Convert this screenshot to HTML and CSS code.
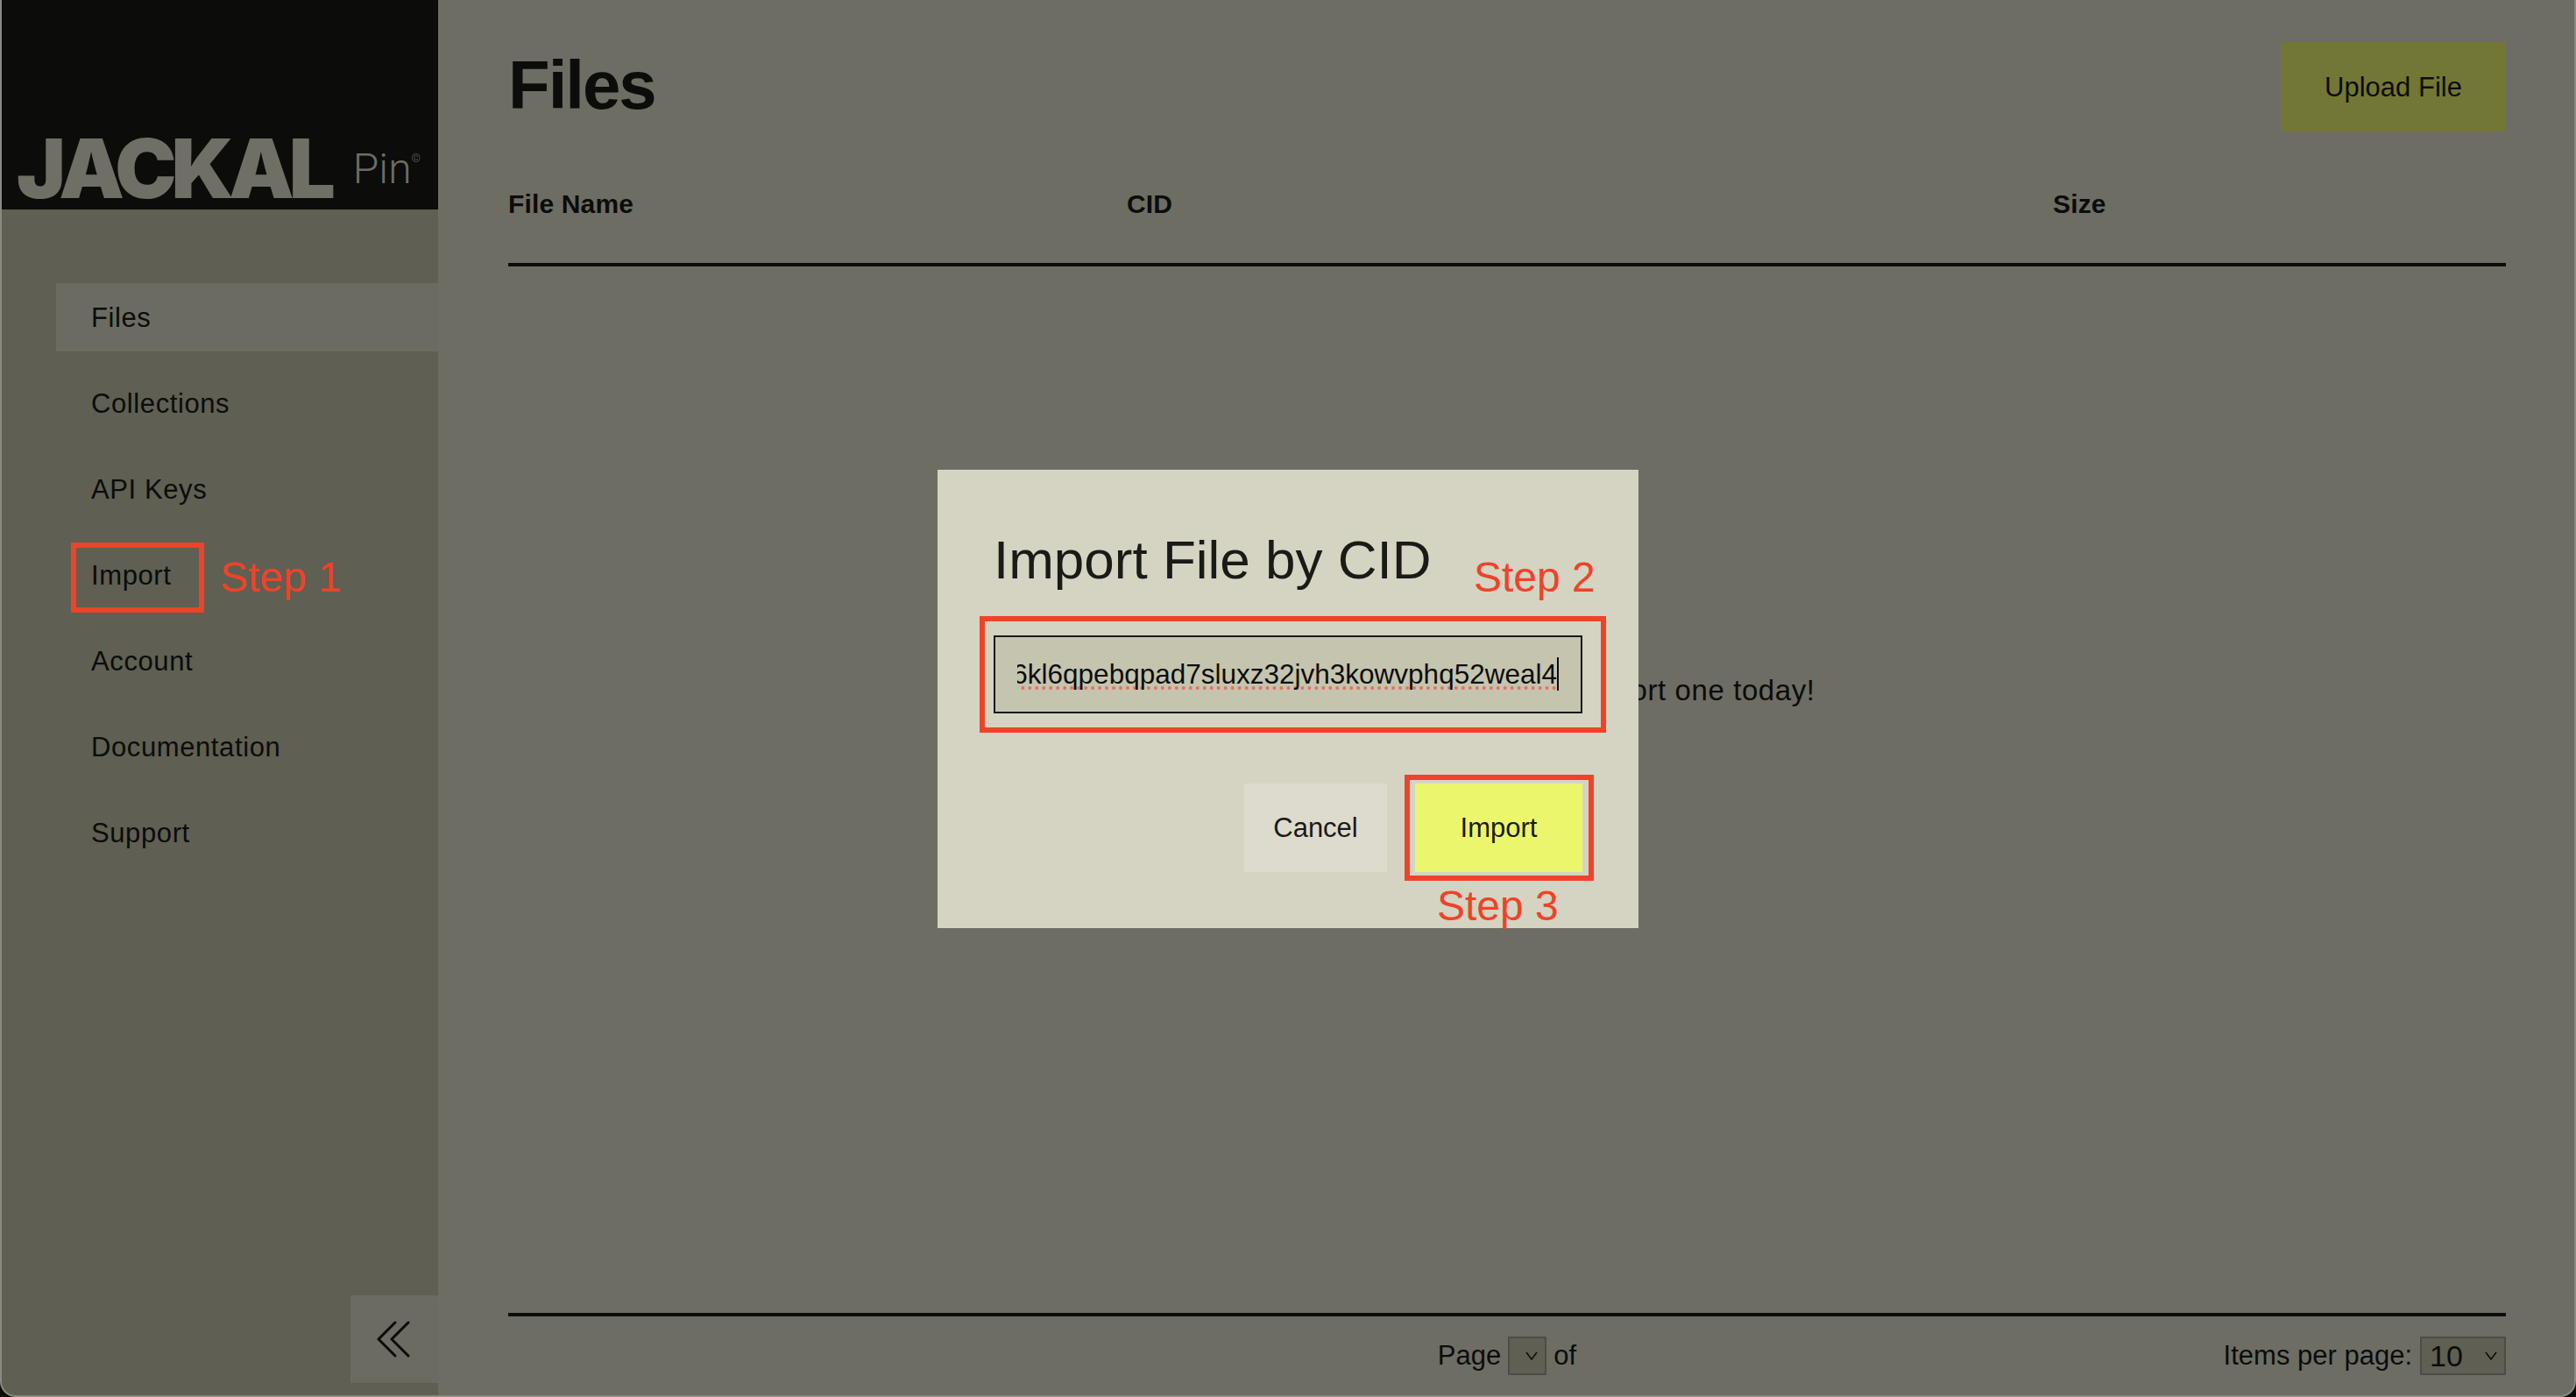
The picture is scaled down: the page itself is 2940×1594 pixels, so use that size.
FILE: index.html
```html
<!DOCTYPE html>
<html lang="en">
<head>
    <meta charset="UTF-8">
    <meta name="viewport" content="width=device-width, initial-scale=1.0">
    <title>Jackal Pin - Files</title>
    <link rel="stylesheet" href="styles.css">
</head>
<body>
    <div class="app">
        <!-- Sidebar -->
        <aside class="sidebar">
            <div class="logo">
                <span class="logo-name">JACKAL</span>
                <span class="logo-pin">Pin<sup>©</sup></span>
            </div>
            <nav class="nav">
                <a class="nav-item active" href="#">Files</a>
                <a class="nav-item" href="#">Collections</a>
                <a class="nav-item" href="#">API Keys</a>
                <a class="nav-item" href="#">Import</a>
                <a class="nav-item" href="#">Account</a>
                <a class="nav-item" href="#">Documentation</a>
                <a class="nav-item" href="#">Support</a>
            </nav>
            <button class="collapse" aria-label="Collapse sidebar">
                <svg width="40" height="44" viewBox="0 0 40 44" fill="none" stroke="#0c0c0a" stroke-width="3" stroke-linecap="round" stroke-linejoin="round">
                    <polyline points="21,3 2,22 21,41"></polyline>
                    <polyline points="36,3 17,22 36,41"></polyline>
                </svg>
            </button>
        </aside>

        <!-- Main Content -->
        <main class="main">
            <div class="top-row">
                <h1>Files</h1>
                <button class="upload">Upload File</button>
            </div>
            <div class="table-head">
                <span>File Name</span>
                <span>CID</span>
                <span>Size</span>
            </div>
            <div class="empty">
                <p>No files found yet, upload or import one today!</p>
            </div>
            <div class="pager">
                <div class="pager-page">
                    <span>Page</span>
                    <span class="select-wrap">
                        <select class="select select-page"></select>
                        <svg class="chevron" width="14" height="10" viewBox="0 0 14 10" fill="none" stroke="#0c0c0a" stroke-width="1.5"><polyline points="1,1 7,9 13,1"></polyline></svg>
                    </span>
                    <span>of</span>
                </div>
                <div class="pager-items">
                    <span>Items per page:</span>
                    <span class="select-wrap">
                        <select class="select select-items"><option>10</option></select>
                        <svg class="chevron" width="14" height="10" viewBox="0 0 14 10" fill="none" stroke="#0c0c0a" stroke-width="1.5"><polyline points="1,1 7,9 13,1"></polyline></svg>
                    </span>
                </div>
            </div>
        </main>

        <!-- Import Modal -->
        <div class="modal">
            <h2>Import File by CID</h2>
            <div class="cid-input">
                <div class="cid-clip">
                    <span class="cid-value">bafkreihdwdcefgh4dqkjv67uzcmw7ojee6kl6qpebqpad7sluxz32jvh3kowvphq52weal4</span>
                </div>
            </div>
            <div class="modal-actions">
                <button class="btn-cancel">Cancel</button>
                <button class="btn-import">Import</button>
            </div>
        </div>

        <!-- Tutorial Annotations -->
        <div class="mark mark-nav"></div>
        <div class="mark mark-input"></div>
        <div class="mark mark-button"></div>
        <span class="step step-1">Step 1</span>
        <span class="step step-2">Step 2</span>
        <span class="step step-3">Step 3</span>
    </div>
</body>
</html>
```

FILE: styles.css
```css
html, body {
    margin: 0;
    padding: 0;
    height: 100%;
    background-color: #0c0c0a;
}

body {
    font-family: "Liberation Sans", Arial, sans-serif;
    font-size: 31px;
    color: #0c0c0a;
}

.app {
    position: relative;
    display: flex;
    height: 1594px;
    box-sizing: border-box;
    overflow: hidden;
    background-color: #6d6d64;
    border: 2px solid #8a8a80;
    border-top: none;
    border-radius: 0 0 18px 18px;
}

/* Sidebar */
.sidebar {
    display: flex;
    flex-direction: column;
    width: 498px;
    flex-shrink: 0;
    background-color: #5f5f53;
}

.logo {
    display: flex;
    align-items: flex-end;
    height: 239px;
    box-sizing: border-box;
    padding: 0 0 3px 17px;
    background-color: #0c0c0a;
    color: #6f6f66;
}

.logo-name {
    font-family: Inter, "Liberation Sans", sans-serif;
    font-size: 94px;
    font-weight: 900;
    line-height: 88px;
    letter-spacing: -6px;
}

.logo-pin {
    margin: 0 0 18px 26px;
    font-family: Roboto, "Liberation Sans", sans-serif;
    font-size: 48px;
    line-height: 50px;
    font-weight: 300;
    color: #6d6d64;
}

.logo-pin sup {
    font-size: 13px;
    line-height: 0;
    vertical-align: 24px;
}

.nav {
    display: flex;
    flex-direction: column;
    gap: 20px;
    margin: 84px 0 0 62px;
}

.nav-item {
    display: flex;
    align-items: center;
    height: 78px;
    box-sizing: border-box;
    padding: 1px 0 0 40px;
    color: #0c0c0a;
    letter-spacing: 0.6px;
    text-decoration: none;
}

.nav-item.active {
    background-color: #6b6b62;
}

.collapse {
    display: flex;
    justify-content: center;
    align-items: center;
    align-self: flex-end;
    width: 100px;
    height: 100px;
    margin-top: auto;
    margin-bottom: 14px;
    padding: 0;
    border: none;
    background-color: #6b6b62;
}

/* Main Content */
.main {
    display: flex;
    flex-direction: column;
    flex: 1;
    padding: 48px 78px 0 80px;
}

.top-row {
    display: flex;
    justify-content: space-between;
    align-items: center;
    height: 102px;
}

h1 {
    margin: 0;
    font-size: 78px;
    line-height: 90px;
    letter-spacing: -2px;
    padding-bottom: 4px;
}

.upload {
    width: 257px;
    height: 102px;
    padding: 2px 0 0;
    border: none;
    background-color: #737735;
    color: #0c0c0a;
    font-family: inherit;
    font-size: 31px;
}

.table-head {
    display: grid;
    grid-template-columns: 706px 1057px 1fr;
    height: 84px;
    padding-top: 66px;
    border-bottom: 4px solid #0c0c0a;
    font-size: 30px;
    font-weight: bold;
    letter-spacing: 0.15px;
}

.empty {
    flex: 1;
    display: flex;
    justify-content: center;
}

.empty p {
    margin: 465px 0 0;
    font-size: 33px;
    letter-spacing: 0.6px;
}

.pager {
    display: grid;
    grid-template-columns: 1fr auto 1fr;
    align-items: center;
    height: 90px;
    border-top: 4px solid #0c0c0a;
}

.pager-page {
    grid-column: 2;
    display: flex;
    align-items: center;
    gap: 8px;
}

.pager-items {
    grid-column: 3;
    display: flex;
    justify-content: flex-end;
    align-items: center;
    gap: 9px;
}

.select-wrap {
    position: relative;
    display: flex;
}

.select {
    appearance: none;
    -webkit-appearance: none;
    height: 44px;
    padding: 0 0 0 9px;
    border: 2px solid #4d4d48;
    border-radius: 0;
    background-color: #5f5f53;
    color: #0c0c0a;
    font-family: inherit;
    font-size: 34px;
}

.select-page {
    width: 44px;
}

.select-items {
    width: 98px;
}

.chevron {
    position: absolute;
    top: 17px;
    right: 10px;
    pointer-events: none;
}

/* Import Modal */
.modal {
    position: absolute;
    left: 1068px;
    top: 536px;
    width: 800px;
    height: 523px;
    box-sizing: border-box;
    padding: 68px 64px 0 64px;
    background-color: #d5d4c3;
    color: #1a1a16;
}

.modal h2 {
    margin: 0;
    font-size: 62px;
    font-weight: normal;
    line-height: 70px;
}

.cid-input {
    display: flex;
    align-items: center;
    height: 89px;
    box-sizing: border-box;
    margin-top: 51px;
    padding: 0 25px 2px;
    border: 2px solid #1a1a16;
    background-color: #c5c4ae;
    color: #0c0c0a;
}

.cid-clip {
    display: flex;
    justify-content: flex-end;
    flex: 1;
    overflow: hidden;
}

.cid-value {
    flex-shrink: 0;
    font-size: 31.5px;
    line-height: 38px;
    text-decoration: underline dotted #e8705c 4px;
    text-decoration-skip-ink: none;
    text-underline-offset: 4px;
    border-right: 2px solid #0c0c0a;
}

.modal-actions {
    display: flex;
    justify-content: flex-end;
    gap: 32px;
    margin-top: 80px;
}

.modal-actions button {
    height: 101px;
    border: none;
    color: #1a1a16;
    font-family: inherit;
    font-size: 31px;
}

.btn-cancel {
    width: 163px;
    background-color: #dcdbcd;
}

.btn-import {
    width: 191px;
    background-color: #ebf66c;
}

/* Tutorial Annotations */
.mark {
    position: absolute;
    box-sizing: border-box;
    border: 6px solid #ee4328;
}

.mark-nav {
    left: 79px;
    top: 619px;
    width: 152px;
    height: 80px;
}

.mark-input {
    left: 1116px;
    top: 703px;
    width: 715px;
    height: 133px;
}

.mark-button {
    left: 1601px;
    top: 884px;
    width: 216px;
    height: 121px;
}

.step {
    position: absolute;
    color: #ee4328;
    font-size: 48px;
    line-height: 58px;
}

.step-1 {
    left: 249px;
    top: 630px;
}

.step-2 {
    left: 1680px;
    top: 630px;
}

.step-3 {
    left: 1638px;
    top: 1005px;
}
```
